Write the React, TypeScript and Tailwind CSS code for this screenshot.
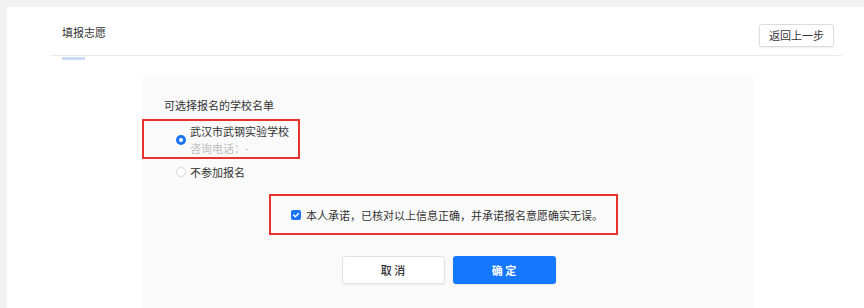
import React from "react";

const font = { fontFamily: '"Noto Sans CJK SC", "Noto Sans", sans-serif' };

export default function App() {
  return (
    <div
      className="w-[864px] h-[308px] overflow-hidden bg-[#f2f2f2] pl-[7px] pt-[7px] text-[11px] text-[#333]"
      style={font}
    >
      <div className="h-full bg-white">
        {/* header */}
        <div className="ml-[43px] mr-[22px] h-[49px] border-b border-[#ebebeb] flex justify-between">
          <div className="pl-[12px] pt-[18px] leading-[14px]">填报志愿</div>
          <button className="mt-[17px] mr-[8px] h-[23px] w-[75px] rounded-[3px] border border-[#dcdcdc] bg-white text-[11px] text-[#333] leading-[21px] shadow-[0_1px_2px_rgba(0,0,0,0.08)]">
            返回上一步
          </button>
        </div>
        <div className="ml-[55px] mt-[1px] h-[3px] w-[23px] bg-[#c9daf6]" />

        {/* panel */}
        <div className="ml-[136px] mt-[15px] w-[610px] h-[240px] bg-[#fafafa]">
          <div className="pl-[21px] pt-[22px] leading-[16px]">可选择报名的学校名单</div>

          <div className="-ml-[1px] mt-[6px] w-[158px] h-[40px] border-2 border-[#e8332d] flex items-center pl-[32px]">
            <span className="mt-[2px] h-[10px] w-[10px] rounded-full bg-[#1a73f5] flex items-center justify-center shrink-0">
              <span className="h-[4px] w-[4px] rounded-full bg-white" />
            </span>
            <div className="ml-[4px] flex flex-col">
              <span className="leading-[16px]">武汉市武钢实验学校</span>
              <span className="leading-[16px] mt-[1px] text-[#bdbdbd]">咨询电话：-</span>
            </div>
          </div>

          <div className="mt-[5px] pl-[33px] flex items-center">
            <span className="h-[10px] w-[10px] rounded-full border border-[#d9d9d9] bg-white shrink-0" />
            <span className="ml-[4px] leading-[16px]">不参加报名</span>
          </div>

          <div className="ml-[126px] mt-[14px] w-[349px] h-[41px] border-2 border-[#e8332d] flex items-center pl-[20px]">
            <span className="h-[10px] w-[10px] rounded-[2px] bg-[#1a73f5] flex items-center justify-center shrink-0">
              <svg width="8" height="8" viewBox="0 0 8 8" fill="none">
                <path d="M1.6 4.1 L3.3 5.7 L6.5 2.4" stroke="white" strokeWidth="1.4" strokeLinecap="round" strokeLinejoin="round" />
              </svg>
            </span>
            <span className="ml-[5px] leading-[16px]">本人承诺，已核对以上信息正确，并承诺报名意愿确实无误。</span>
          </div>

          <div className="mt-[21px] flex justify-center gap-[8px] pl-[1px]">
            <button className="h-[28px] w-[103px] rounded-[3px] border border-[#e3e3e3] bg-white text-[11px] text-[#333] font-medium shadow-[0_1px_2px_rgba(0,0,0,0.06)]">
              取 消
            </button>
            <button className="h-[28px] w-[103px] rounded-[3px] bg-[#1677ff] text-[11px] text-white font-bold shadow-[0_1px_2px_rgba(0,0,0,0.08)]">
              确 定
            </button>
          </div>
        </div>
      </div>
    </div>
  );
}
